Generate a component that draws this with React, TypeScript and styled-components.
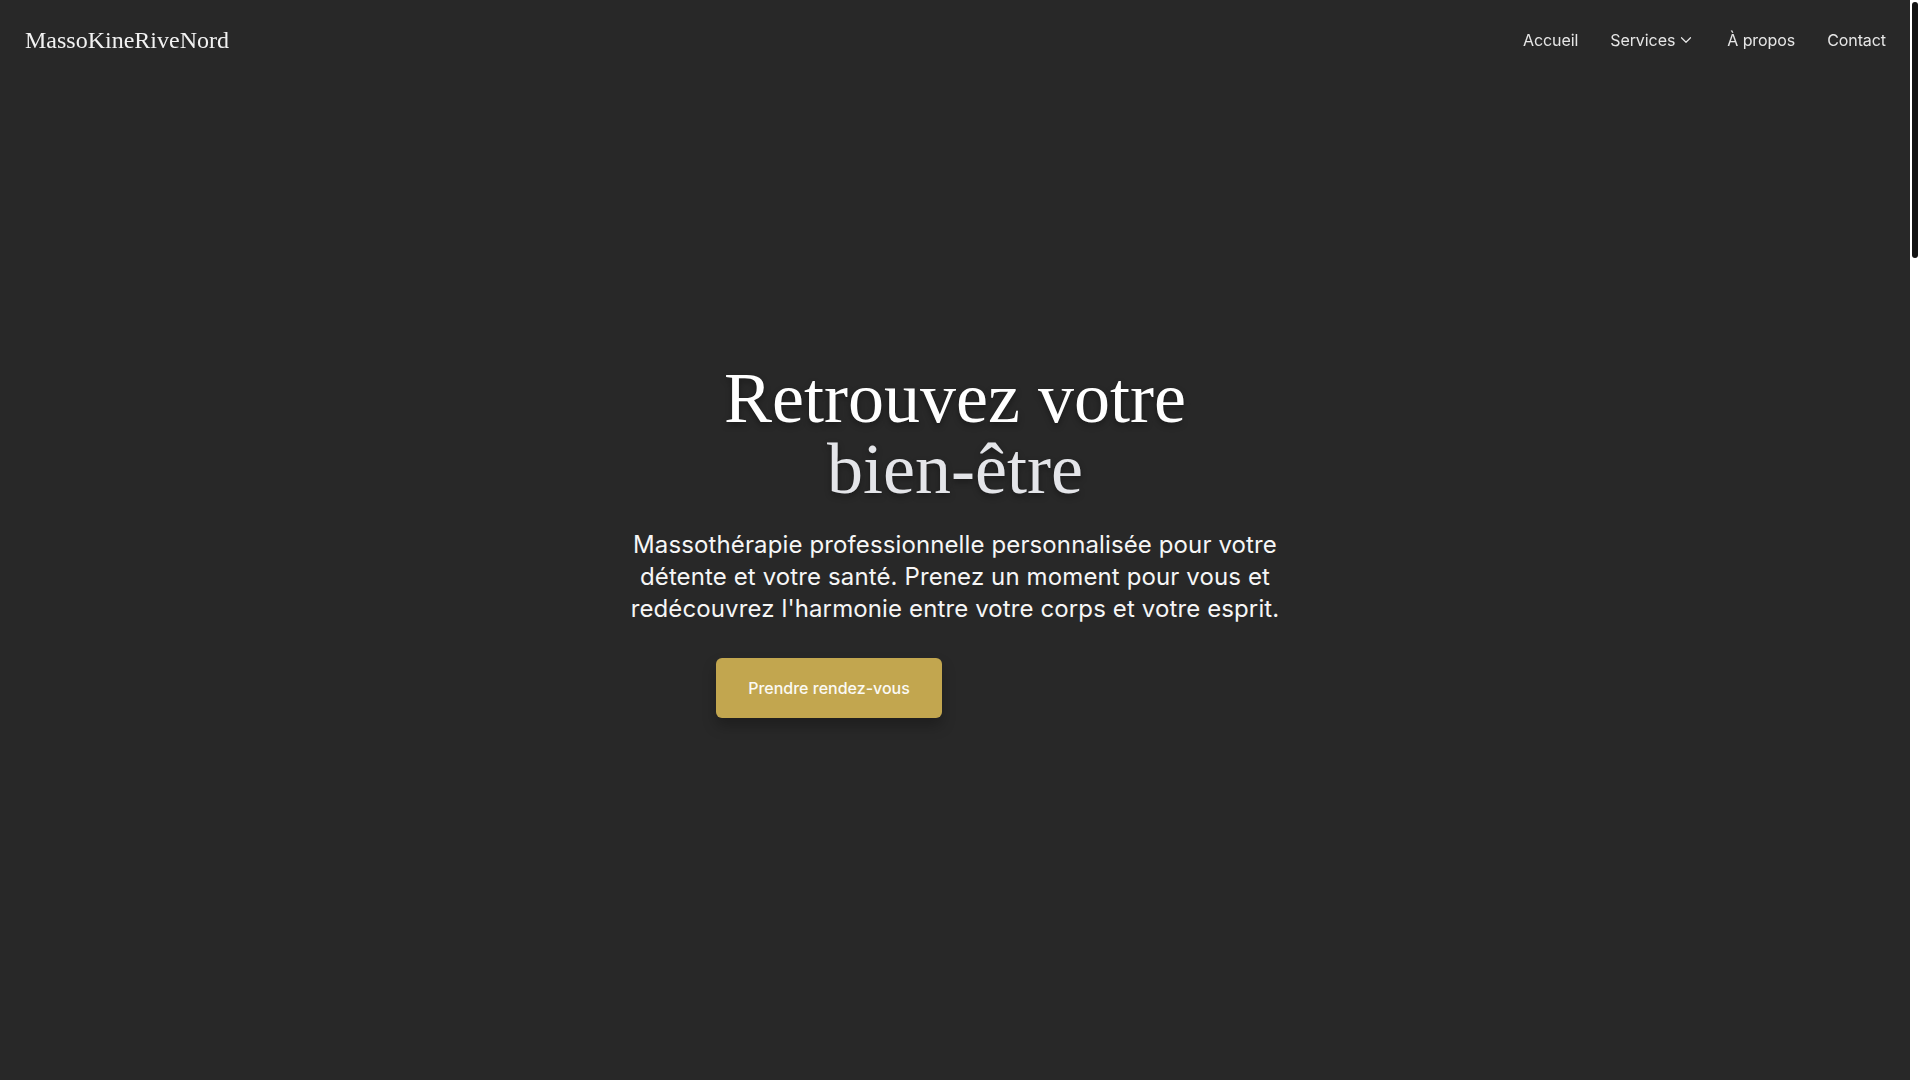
import React from "react";
import styled, { createGlobalStyle } from "styled-components";
import { ChevronDown } from "lucide-react";

const GlobalStyle = createGlobalStyle`
    html, body {
        margin: 0;
        padding: 0;
        height: 100%;
        overflow: hidden;
        background-color: #282828;
        color: #f5f5f5;
        font-family: Inter, "Noto Sans", sans-serif;
    }
    * {
        box-sizing: border-box;
    }
`;

const navLinks = [
    { key: "accueil", label: "Accueil", dropdown: false },
    { key: "services", label: "Services", dropdown: true },
    { key: "apropos", label: "À propos", dropdown: false },
    { key: "contact", label: "Contact", dropdown: false }
];

const services = [
    {
        title: "Massage suédois",
        text: "Un massage classique pour détendre les muscles et améliorer la circulation."
    },
    {
        title: "Massage thérapeutique",
        text: "Un soin ciblé pour soulager les tensions chroniques et les douleurs."
    },
    {
        title: "Kinésithérapie",
        text: "Des techniques manuelles pour retrouver mobilité et équilibre."
    }
];

// the page scrolls inside this box; the rail on the right stands for its scrollbar
const Page = styled.div`
    position: relative;
    height: 100vh;
    overflow-y: scroll;
    background-color: #282828;
    border-right: 10px solid #ffffff;

    &::-webkit-scrollbar {
        width: 0;
    }
    &::after {
        content: "";
        position: fixed;
        top: 2px;
        right: 2px;
        width: 6px;
        height: 256px;
        border-radius: 3px;
        background: #121212;
    }
`;

const Header = styled.header`
    position: sticky;
    top: 0;
    height: 80px;
    margin-bottom: -80px;
    padding: 0 24px 0 25px;
    display: flex;
    align-items: center;
    justify-content: space-between;
    z-index: 10;
`;

const Logo = styled.a`
    font-family: "Liberation Serif", "Times New Roman", serif;
    font-size: 24px;
    color: #f2f2f2;
    text-decoration: none;
    padding-top: 1px;
`;

const Nav = styled.nav`
    display: flex;
    align-items: center;
    gap: 32px;
`;

const NavLink = styled.a`
    display: flex;
    align-items: center;
    gap: 2px;
    font-size: 16px;
    letter-spacing: -0.005em;
    color: #e6e6e6;
    text-decoration: none;
    cursor: pointer;
`;

const Hero = styled.section`
    height: 1080px;
    display: flex;
    align-items: center;
    justify-content: center;
    padding: 0 24px;
`;

const HeroContent = styled.div`
    display: flex;
    flex-direction: column;
    align-items: center;
    text-align: center;
    max-width: 672px;
`;

const Title = styled.h1`
    margin: 0 0 24px;
    font-family: "Liberation Serif", "Times New Roman", serif;
    font-weight: 400;
    font-size: 72px;
    line-height: 71px;
    color: #ffffff;
    text-shadow: 0 3px 6px rgba(0, 0, 0, 0.35);
`;

const TitleAccent = styled.span`
    display: block;
    color: #e4e5e9;
`;

const Lead = styled.p`
    margin: 0 0 33px;
    font-size: 24px;
    line-height: 32px;
    letter-spacing: 0.005em;
    color: #f6f6f6;
`;

const ButtonRow = styled.div`
    display: flex;
    gap: 16px;
    justify-content: center;
`;

const PrimaryButton = styled.a`
    display: inline-flex;
    align-items: center;
    justify-content: center;
    height: 60px;
    padding: 0 32px;
    border-radius: 6px;
    background-color: #c2a64f;
    color: #fbfaf5;
    font-size: 16px;
    font-weight: 500;
    text-decoration: none;
    box-shadow: 0 8px 14px rgba(0, 0, 0, 0.25);
`;

const GhostButton = styled.a`
    display: inline-flex;
    align-items: center;
    justify-content: center;
    width: 236px;
    height: 60px;
    border-radius: 6px;
    font-size: 16px;
    font-weight: 500;
    color: transparent;
    text-decoration: none;
`;

const Section = styled.section<{ $height: number }>`
    min-height: ${(p) => p.$height}px;
    padding: 120px 24px;
    display: flex;
    flex-direction: column;
    align-items: center;
    gap: 48px;
`;

const SectionTitle = styled.h2`
    margin: 0;
    font-family: "Liberation Serif", "Times New Roman", serif;
    font-weight: 400;
    font-size: 48px;
    color: #ffffff;
`;

const CardGrid = styled.div`
    display: grid;
    grid-template-columns: repeat(3, 360px);
    gap: 32px;
`;

const Card = styled.div`
    padding: 32px;
    border-radius: 8px;
    background-color: #303030;
`;

const CardTitle = styled.h3`
    margin: 0 0 12px;
    font-size: 22px;
    font-weight: 600;
    color: #c2a64f;
`;

const CardText = styled.p`
    margin: 0;
    font-size: 16px;
    line-height: 26px;
    color: #d4d4d4;
`;

const Footer = styled.footer`
    height: 170px;
    display: flex;
    align-items: center;
    justify-content: center;
    font-size: 14px;
    color: #9a9a9a;
`;

export default function App() {
    return (
        <Page>
            <GlobalStyle />
            <Header>
                <Logo href="#">MassoKineRiveNord</Logo>
                <Nav>
                    {navLinks.map((link) => (
                        <NavLink key={link.key} href={"#" + link.key}>
                            {link.label}
                            {link.dropdown && <ChevronDown size={18} strokeWidth={1.6} />}
                        </NavLink>
                    ))}
                </Nav>
            </Header>
            <Hero id="accueil">
                <HeroContent>
                    <Title>
                        Retrouvez votre
                        <TitleAccent>bien-être</TitleAccent>
                    </Title>
                    <Lead>
                        Massothérapie professionnelle personnalisée pour votre détente et votre santé. Prenez un
                        moment pour vous et redécouvrez l'harmonie entre votre corps et votre esprit.
                    </Lead>
                    <ButtonRow>
                        <PrimaryButton href="#contact">Prendre rendez-vous</PrimaryButton>
                        <GhostButton href="#services">Découvrir nos services</GhostButton>
                    </ButtonRow>
                </HeroContent>
            </Hero>
            <Section id="services" $height={1200}>
                <SectionTitle>Nos services</SectionTitle>
                <CardGrid>
                    {services.map((s, i) => (
                        <Card key={i}>
                            <CardTitle>{s.title}</CardTitle>
                            <CardText>{s.text}</CardText>
                        </Card>
                    ))}
                </CardGrid>
            </Section>
            <Section id="apropos" $height={1100}>
                <SectionTitle>À propos</SectionTitle>
            </Section>
            <Section id="contact" $height={1000}>
                <SectionTitle>Contact</SectionTitle>
            </Section>
            <Footer>© {new Date().getFullYear()} MassoKineRiveNord</Footer>
        </Page>
    );
}
